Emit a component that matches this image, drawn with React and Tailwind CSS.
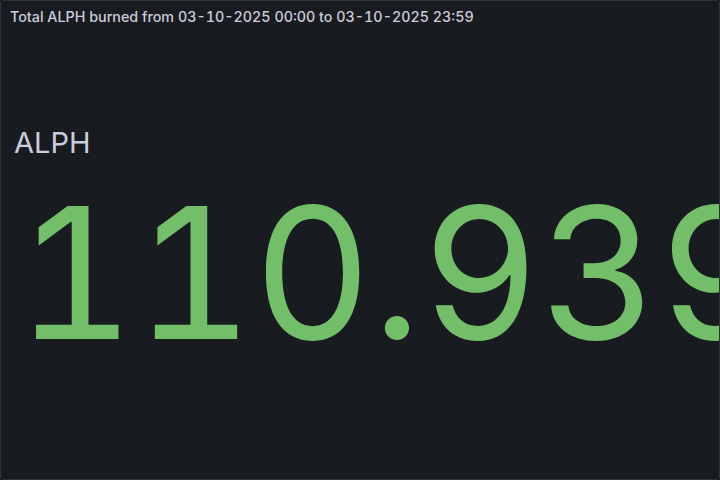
export default function App() {
  return (
    <div className="w-[720px] h-[480px] bg-[#111217] font-['Inter',sans-serif]">
      <div className="w-full h-full bg-[#181b1f] border border-[#2e3138] rounded-[2px] overflow-hidden flex flex-col">
        <div className="h-8 pl-[9px] flex items-center text-[14.3px] font-medium tabular-nums text-[#ccccdc] whitespace-nowrap">
          Total ALPH burned from 03-10-2025 00:00 to 03-10-2025 23:59
        </div>
        <div className="flex-1 flex flex-col pl-[13px] pt-[95px]">
          <div className="text-[29px] leading-none text-[#ccccdc]">ALPH</div>
          <div className="mt-[24px] ml-[2px] text-[183px] leading-none tabular-nums text-[#73bf69] whitespace-nowrap">
            110.939
          </div>
        </div>
      </div>
    </div>
  );
}
